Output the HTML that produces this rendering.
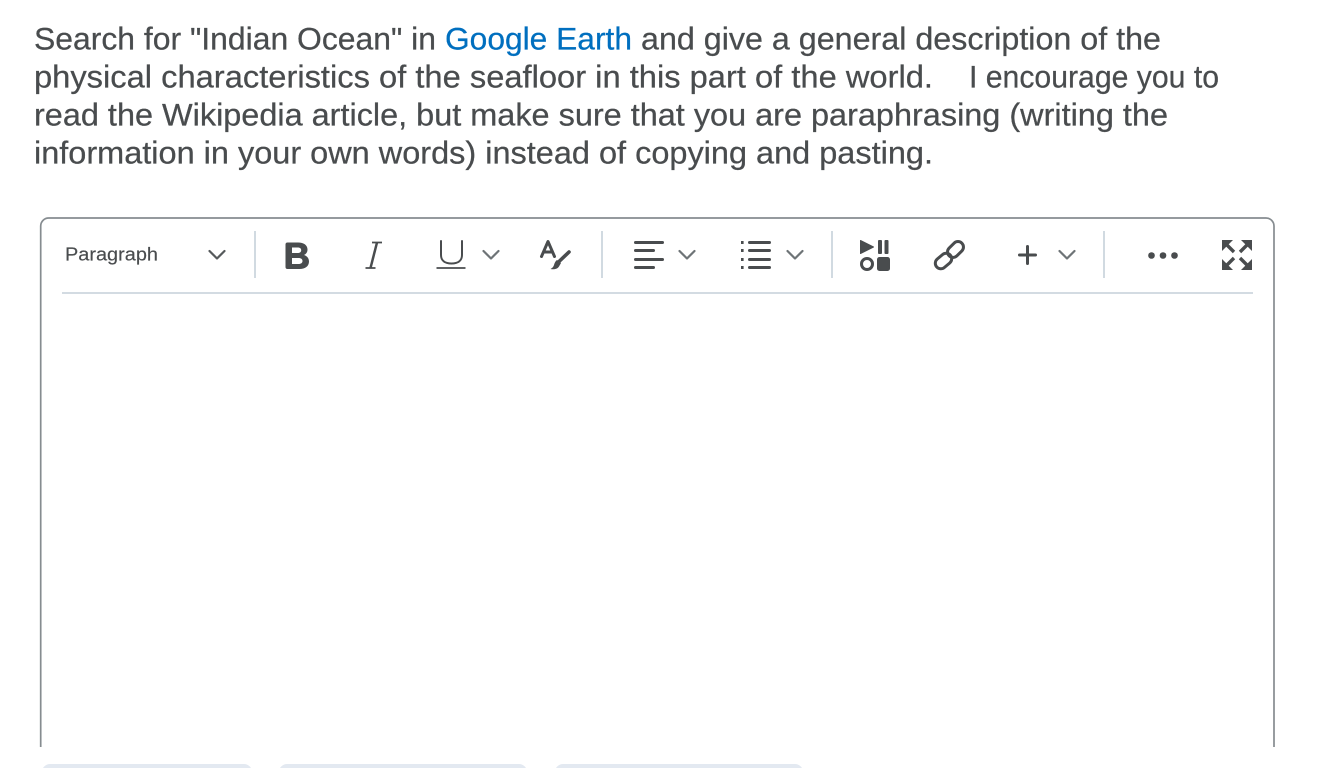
<!DOCTYPE html>
<html lang="en">
<head>
<meta charset="utf-8">
<title>Editor</title>
<style>
html,body{margin:0;padding:0;background:#fff;width:1332px;height:768px;overflow:hidden}
svg{display:block}
text{font-family:"Liberation Sans",sans-serif}
.t{font-size:31.5px;fill:#494c4e;stroke:#494c4e;stroke-width:.25}
.ic{fill:none;stroke:#494c4e;stroke-linecap:round;stroke-linejoin:round}
.ch{fill:none;stroke:#6e7477;stroke-width:2.2;stroke-linecap:round;stroke-linejoin:round}
.sep{stroke:#c9d3dc;stroke-width:1.7}
</style>
</head>
<body>
<svg width="1332" height="768" viewBox="0 0 1332 768" xmlns="http://www.w3.org/2000/svg">
<rect width="1332" height="768" fill="#fff"/>

<text class="t" x="34" y="49.500" textLength="402" lengthAdjust="spacingAndGlyphs">Search for "Indian Ocean" in</text>
<text class="t" x="445" y="49.500" textLength="187" lengthAdjust="spacingAndGlyphs" style="fill:#006fbf;stroke:#006fbf">Google Earth</text>
<text class="t" x="641" y="49.500" textLength="520" lengthAdjust="spacingAndGlyphs">and give a general description of the</text>
<text class="t" x="34" y="87.500" textLength="899" lengthAdjust="spacingAndGlyphs">physical characteristics of the seafloor in this part of the world.</text>
<text class="t" x="969" y="87.500" textLength="250" lengthAdjust="spacingAndGlyphs">I encourage you to</text>
<text class="t" x="34" y="125.500" textLength="1134" lengthAdjust="spacingAndGlyphs">read the Wikipedia article, but make sure that you are paraphrasing (writing the</text>
<text class="t" x="34" y="163.500" textLength="899" lengthAdjust="spacingAndGlyphs">information in your own words) instead of copying and pasting.</text>

<path d="M40.700 747V226a8 8 0 0 1 8-8H1266a8 8 0 0 1 8 8V747" fill="none" stroke="#868c90" stroke-width="1.700"/>
<line x1="62" y1="293" x2="1253" y2="293" stroke="#cdd6de" stroke-width="1.700"/>

<line class="sep" x1="255" y1="231" x2="255" y2="278"/>
<line class="sep" x1="602" y1="231" x2="602" y2="278"/>
<line class="sep" x1="832" y1="231" x2="832" y2="278"/>
<line class="sep" x1="1104" y1="231" x2="1104" y2="278"/>

<text x="65" y="260.500" font-size="18.500" fill="#494c4e" stroke="#494c4e" stroke-width=".15" textLength="93" lengthAdjust="spacingAndGlyphs">Paragraph</text>
<path class="ch" d="M209.500 251l7.500 7.500 7.500-7.500" style="stroke:#565a5c"/>

<!-- B -->
<path d="M287.500 242.500h10.500c6 0 9.500 2.800 9.500 7 0 2.700-1.300 4.500-3.500 5.500 3 1 5 3.300 5 6.500 0 4.700-3.800 7.500-9.500 7.500H287.500a2 2 0 0 1-2-2V244.500a2 2 0 0 1 2-2zM292 247.500v5.500h5.500c2.300 0 3.700-1 3.700-2.800s-1.400-2.700-3.700-2.700zM292 258v6h6.500c2.500 0 4-1.100 4-3s-1.500-3-4-3z" fill="#494c4e" fill-rule="evenodd"/>

<!-- I -->
<path d="M372 242.500h10M365.500 268h10" fill="none" stroke="#494c4e" stroke-width="1.700"/>
<path d="M377 242.500l-6.500 25.500" fill="none" stroke="#494c4e" stroke-width="2.500"/>

<!-- U -->
<path d="M441 241v14c0 5.500 3.800 8.500 10.500 8.500s10.500-3 10.500-8.500V241" fill="none" stroke="#494c4e" stroke-width="2" stroke-linecap="round"/>
<line x1="436.500" y1="268" x2="465.500" y2="268" stroke="#494c4e" stroke-width="1.800"/>
<path class="ch" d="M483.500 251l7.500 7.500 7.500-7.500"/>

<!-- A + brush -->
<path class="ic" stroke-width="3" d="M541.500 256.500l6.500-15 6.500 15M544 252h8"/>
<path d="M569 252l-10.500 10" fill="none" stroke="#494c4e" stroke-width="3.600" stroke-linecap="round"/>
<path d="M557 260c-1.500 1-2.500 3-3 5-.5 1.500-1.500 3-3.500 4 3.500.8 7 0 8.500-2.500l2-3.500z" fill="#494c4e"/>

<!-- align left -->
<path class="ic" stroke-width="3" d="M635.500 242.500h27M635.500 250.500h18M635.500 259.500h27M635.500 267.500h18"/>
<path class="ch" d="M679.500 251l7.500 7.500 7.500-7.500"/>

<!-- list -->
<path class="ic" stroke-width="3" d="M749.500 242.500h20M749.500 250.500h20M749.500 259.500h20M749.500 267.500h20"/>
<g fill="#494c4e">
<rect x="741" y="241" width="2.600" height="3"/>
<rect x="741" y="249" width="2.600" height="3"/>
<rect x="741" y="258" width="2.600" height="3"/>
<rect x="741" y="266" width="2.600" height="3"/>
</g>
<path class="ch" d="M787.500 251l7.500 7.500 7.500-7.500"/>

<!-- media -->
<path d="M860.500 240.500l13 6.500-13 6.500z" fill="#494c4e" stroke="#494c4e" stroke-width="1" stroke-linejoin="round"/>
<rect x="878" y="240" width="4" height="14" rx="1" fill="#494c4e"/>
<rect x="884.500" y="240" width="4" height="14" rx="1" fill="#494c4e"/>
<circle cx="867" cy="264" r="5.500" fill="none" stroke="#494c4e" stroke-width="3"/>
<rect x="877" y="257" width="13" height="14" rx="2.500" fill="#494c4e"/>

<!-- link: two overlapping chain rings -->
<g fill="none" stroke="#494c4e" stroke-width="3">
<rect x="-9" y="-5.500" width="18" height="11" rx="5.500" transform="translate(943.500 261) rotate(-40)"/>
<rect x="-9" y="-5.500" width="18" height="11" rx="5.500" transform="translate(955.500 249.500) rotate(-45)"/>
</g>

<!-- plus -->
<path class="ic" stroke-width="3" d="M1027.500 246.500v17M1019.500 255h16"/>
<path class="ch" d="M1059.500 251l7.500 7.500 7.500-7.500"/>

<!-- dots -->
<g fill="#494c4e">
<circle cx="1151.500" cy="255.500" r="3.300"/>
<circle cx="1163" cy="255.500" r="3.300"/>
<circle cx="1174.500" cy="255.500" r="3.300"/>
</g>

<!-- fullscreen -->
<g fill="#494c4e">
<path d="M1222 240h11l-11 11z"/>
<path d="M1252 240h-11l11 11z"/>
<path d="M1222 270h11l-11-11z"/>
<path d="M1252 270h-11l11-11z"/>
</g>
<path d="M1226 244l8 8M1248 244l-8 8M1226 266l8-8M1248 266l-8-8" fill="none" stroke="#494c4e" stroke-width="3.400"/>

<!-- buttons peeking at bottom -->
<rect x="42" y="764" width="210" height="24" rx="8" fill="#e3e9f1"/>
<rect x="279" y="764" width="248" height="24" rx="8" fill="#e3e9f1"/>
<rect x="555" y="764" width="248" height="24" rx="8" fill="#e3e9f1"/>
</svg>
</body>
</html>
